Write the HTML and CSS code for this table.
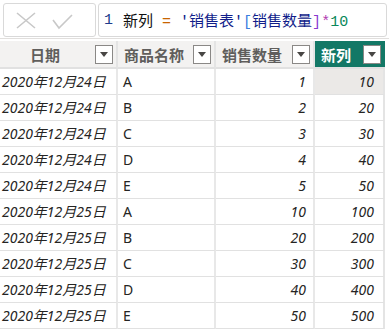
FILE: index.html
```html
<!DOCTYPE html>
<html>
<head>
<meta charset="utf-8">
<link rel="stylesheet" href="styles.css">
</head>
<body>
<div class="topbar">
  <div class="actions">
    <svg class="ico" width="93" height="34" viewBox="0 0 93 34">
      <path d="M14 10 L32 25 M32 10 L14 25" stroke="#c8c8c8" stroke-width="1.6" fill="none"/>
      <path d="M50 17 L56 25 L69 12" stroke="#c8c8c8" stroke-width="1.6" fill="none"/>
    </svg>
  </div>
  <div class="formula"><span class="ln">1</span><span class="code"><span class="k">新列</span> <span class="op">=</span> <span class="tb">'销售表'</span><span class="br">[</span><span class="tb">销售数量</span><span class="br2">]</span><span class="mul">*</span><span class="num">10</span></span></div>
</div>
<div class="grid">
  <div class="hd c1"><span class="hl">日期</span><span class="dd"></span></div>
  <div class="hd"><span class="hl">商品名称</span><span class="dd"></span></div>
  <div class="hd"><span class="hl">销售数量</span><span class="dd"></span></div>
  <div class="hd sel"><span class="hl">新列</span><span class="dd"></span></div>

  <div class="cell it">2020年12月24日</div><div class="cell">A</div><div class="cell it r">1</div><div class="cell it r last cur">10</div>
  <div class="cell it">2020年12月24日</div><div class="cell">B</div><div class="cell it r">2</div><div class="cell it r last">20</div>
  <div class="cell it">2020年12月24日</div><div class="cell">C</div><div class="cell it r">3</div><div class="cell it r last">30</div>
  <div class="cell it">2020年12月24日</div><div class="cell">D</div><div class="cell it r">4</div><div class="cell it r last">40</div>
  <div class="cell it">2020年12月24日</div><div class="cell">E</div><div class="cell it r">5</div><div class="cell it r last">50</div>
  <div class="cell it">2020年12月25日</div><div class="cell">A</div><div class="cell it r">10</div><div class="cell it r last">100</div>
  <div class="cell it">2020年12月25日</div><div class="cell">B</div><div class="cell it r">20</div><div class="cell it r last">200</div>
  <div class="cell it">2020年12月25日</div><div class="cell">C</div><div class="cell it r">30</div><div class="cell it r last">300</div>
  <div class="cell it">2020年12月25日</div><div class="cell">D</div><div class="cell it r">40</div><div class="cell it r last">400</div>
  <div class="cell it">2020年12月25日</div><div class="cell">E</div><div class="cell it r">50</div><div class="cell it r last">500</div>
</div>
</body>
</html>
```
FILE: styles.css
```css
html, body {
  margin: 0;
  padding: 0;
  background: #ffffff;
}
body {
  width: 389px;
  height: 332px;
  overflow: hidden;
  font-family: "Noto Sans", "Noto Sans CJK SC", sans-serif;
  color: #252423;
}
.topbar {
  display: flex;
  gap: 2px;
  padding: 3px 2px 0 3px;
  height: 39px;
  box-sizing: border-box;
  border-bottom: 1px solid #e1dfdd;
}
.actions {
  width: 93px;
  height: 34px;
  box-sizing: border-box;
  border: 1px solid #d9d9d9;
  border-radius: 3px;
  position: relative;
}
.ico {
  position: absolute;
  left: -1px;
  top: -1px;
}
.formula {
  flex: 1;
  height: 34px;
  box-sizing: border-box;
  border: 1px solid #d9d9d9;
  border-radius: 3px;
  display: flex;
  align-items: center;
  padding-left: 5px;
  font-family: "Liberation Mono", "Noto Sans CJK SC", monospace;
  font-size: 15px;
  white-space: pre;
  color: #000;
}
.ln {
  color: #1e3c8c;
  width: 19px;
}
.k { color: #111; }
.op { color: #c86400; }
.tb { color: #101d8a; }
.br { color: #3a7fe0; }
.br2 { color: #8a3ad0; }
.mul { color: #b03ab0; }
.num { color: #09885a; }

.grid {
  display: grid;
  grid-template-columns: 118px 98px 99px 70px;
  grid-auto-rows: 26px;
  grid-template-rows: 28px;
  margin-top: 2px;
}
.hd {
  background: #f3f2f1;
  border-right: 2px solid #e4e4e4;
  border-bottom: 2px solid #e1e1e1;
  display: flex;
  align-items: center;
  justify-content: space-between;
  padding: 0 3px 0 6px;
  font-weight: bold;
  font-size: 15px;
  color: #605e5c;
  box-sizing: border-box;
}
.hd.c1 {
  padding-left: 30px;
}
.hd.sel {
  background: #137866;
  color: #ffffff;
  border-right: none;
  padding-right: 4px;
}
.dd {
  width: 18px;
  height: 19px;
  box-sizing: border-box;
  border: 1px solid #8a8886;
  background: #ffffff;
  position: relative;
  flex: none;
}
.dd::after {
  content: "";
  position: absolute;
  left: 4px;
  top: 6px;
  border-left: 4px solid transparent;
  border-right: 4px solid transparent;
  border-top: 5px solid #484644;
}
.cell {
  border-right: 2px solid #e8e8e8;
  border-bottom: 1px solid #e1e1e1;
  box-sizing: border-box;
  font-size: 14px;
  line-height: 25px;
  padding: 0 4px 0 5px;
  white-space: nowrap;
  overflow: hidden;
}
.cell.it {
  font-style: italic;
}
.grid > .cell.it:nth-child(4n+1) {
  padding-left: 2px;
}
.cell.r {
  text-align: right;
  padding-right: 7px;
}
.cell.last {
  border-right: 2px solid #e4e4e4;
  padding-right: 9px;
}
.cell.cur {
  background: #ebe9e7;
}
```
